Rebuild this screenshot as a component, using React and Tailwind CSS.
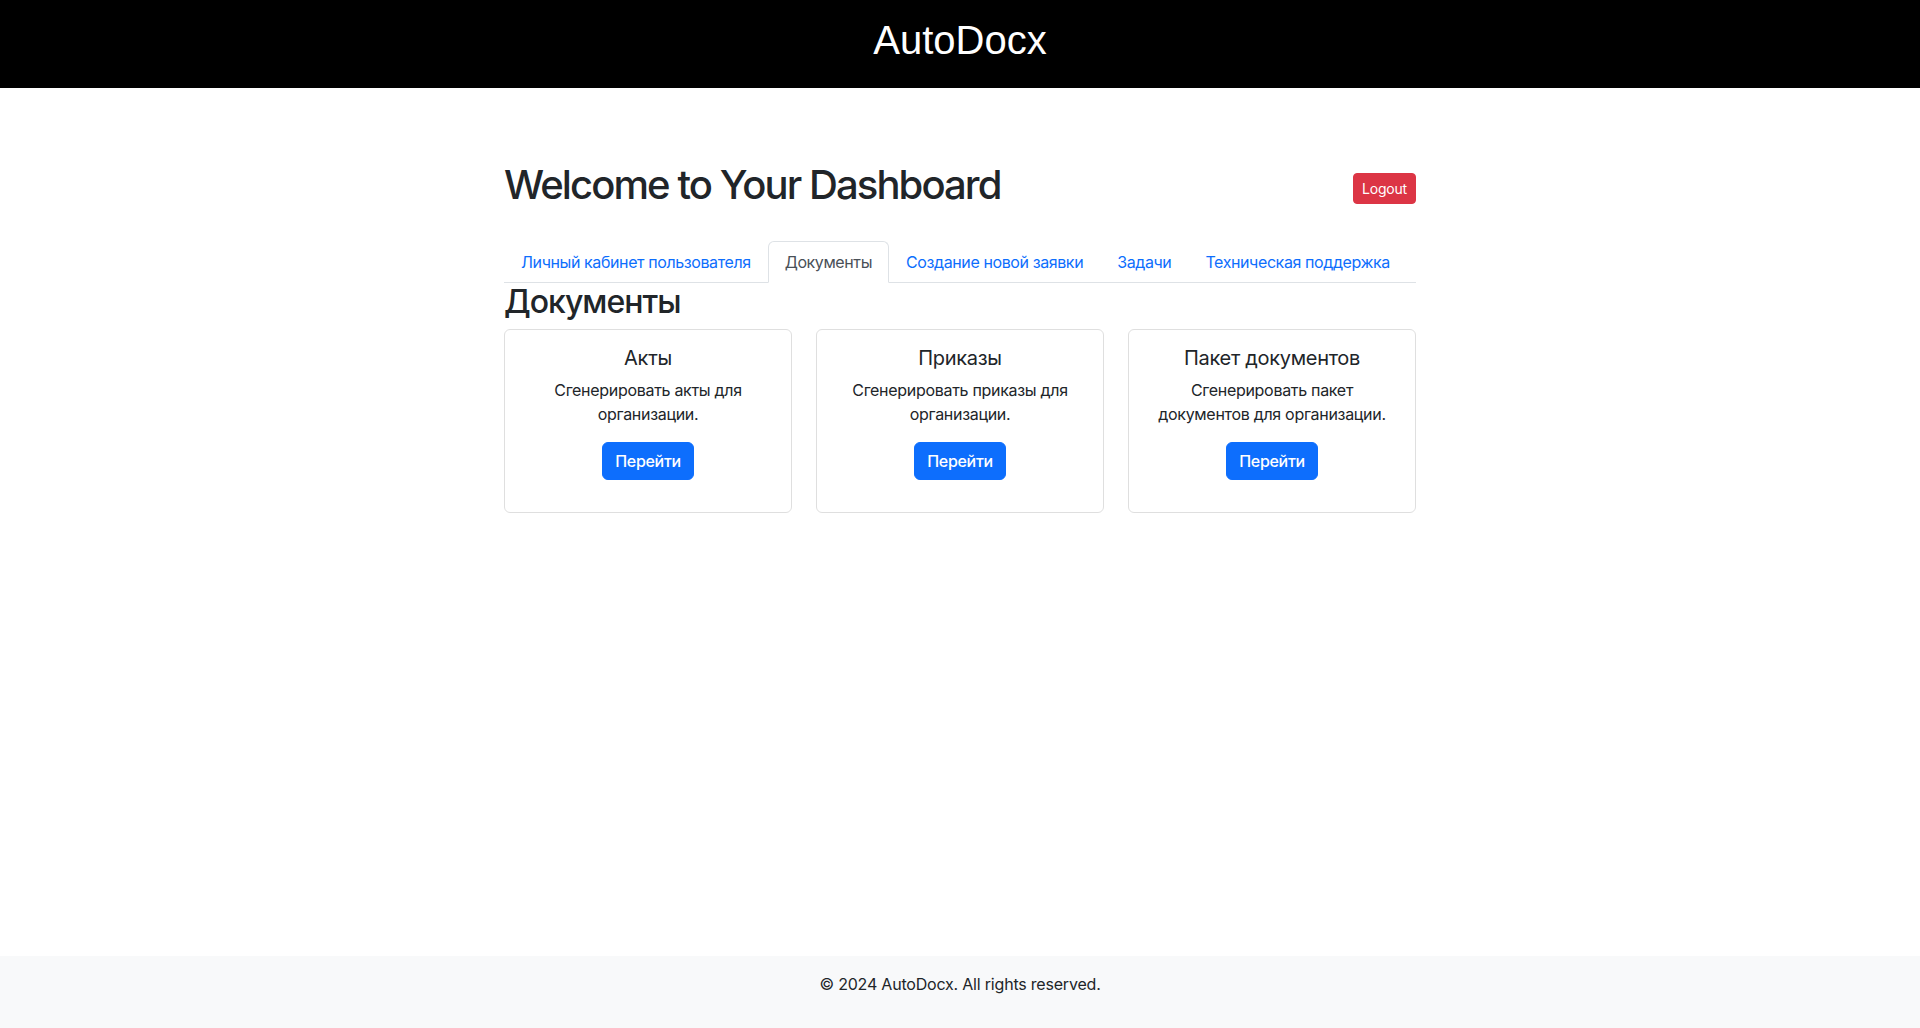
// Dashboard page: documents tab
const tabs = [
  "Личный кабинет пользователя",
  "Документы",
  "Создание новой заявки",
  "Задачи",
  "Техническая поддержка",
];

const cards = [
  { title: "Акты", text: "Сгенерировать акты для организации." },
  { title: "Приказы", text: "Сгенерировать приказы для организации." },
  { title: "Пакет документов", text: "Сгенерировать пакет документов для организации." },
];

export default function App() {
  const active = "Документы";

  return (
    <div className="min-h-screen flex flex-col bg-white text-[#212529] font-['Inter',sans-serif]">
      <header className="bg-black h-[88px] pt-4">
        <h1 className="text-center text-white text-[40px] leading-[48px] font-['Liberation_Sans',Arial,sans-serif]">
          AutoDocx
        </h1>
      </header>

      <main className="flex-1">
        <div className="w-[912px] mx-auto pt-[73px]">
          <div className="flex items-center justify-between h-12">
            <h1 className="text-[40px] leading-[48px] font-medium tracking-[-1.9px]">
              Welcome to Your Dashboard
            </h1>
            <button className="mt-1.5 bg-[#dc3545] text-white text-sm leading-[21px] px-2 py-1 rounded-[4px] border border-[#dc3545] tracking-[-0.2px]">
              Logout
            </button>
          </div>

          <ul className="flex mt-[32px] border-b border-[#dee2e6]">
            {tabs.map((t) => (
              <li key={t} className="-mb-px shrink-0">
                <a
                  className={
                    t === active
                      ? "block whitespace-nowrap px-4 py-2 text-base leading-6 text-[#495057] bg-white border border-[#dee2e6] border-b-white rounded-t-[6px] tracking-[-0.4px]"
                      : "block whitespace-nowrap px-4 py-2 text-base leading-6 text-[#0d6efd] border border-transparent tracking-[-0.4px]"
                  }
                >
                  {t}
                </a>
              </li>
            ))}
          </ul>

          <h2 className="text-[32px] leading-[38px] font-medium mb-2 tracking-[-1px]">
            Документы
          </h2>

          <div className="grid grid-cols-3 gap-6">
            {cards.map((c) => (
              <div
                key={c.title}
                className="border border-[#dfdfdf] rounded-[6px] p-4 pb-8 text-center"
              >
                <h5 className="text-xl leading-6 font-normal mb-2 tracking-[-0.3px]">
                  {c.title}
                </h5>
                <p className="text-base leading-6 mb-4 px-2 tracking-[-0.3px]">
                  {c.text}
                </p>
                <button className="bg-[#0d6efd] text-white text-base leading-6 px-3 py-1.5 rounded-[6px] border border-[#0d6efd] font-medium tracking-[-0.3px]">
                  Перейти
                </button>
              </div>
            ))}
          </div>
        </div>
      </main>

      <footer className="bg-[#f8f9fa] h-[72px] pt-4 text-center">
        <p className="text-base leading-6 tracking-[-0.2px]">
          © 2024 AutoDocx. All rights reserved.
        </p>
      </footer>
    </div>
  );
}
